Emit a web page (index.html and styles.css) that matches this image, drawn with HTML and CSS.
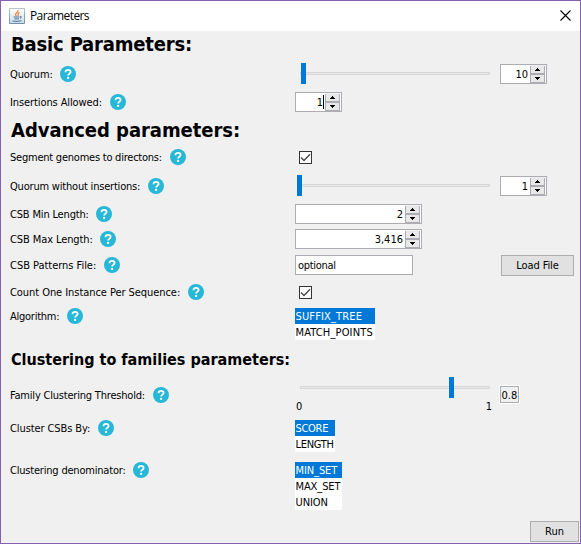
FILE: index.html
```html
<!DOCTYPE html>
<html lang="en">
<head>
<meta charset="utf-8">
<title>Parameters</title>
<link rel="stylesheet" href="styles.css">
</head>
<body>
<svg class="defs" aria-hidden="true">
  <symbol id="help" viewBox="0 0 16 16"><circle cx="8" cy="8" r="8" fill="#27b7d7"/><path d="M5.5 6.2C5.5 4.6 6.600 3.800 8 3.800S10.600 4.600 10.600 6C10.600 7.500 8.100 7.800 8.100 9.600" fill="none" stroke="#fff" stroke-width="1.8"/><circle cx="8.1" cy="11.9" r="1.15" fill="#fff"/></symbol>
  <symbol id="up" viewBox="0 0 5 3"><path d="M0 3V2h1V1h1V0h1v1h1v1h1v1z"/></symbol>
  <symbol id="down" viewBox="0 0 5 3"><path d="M0 0h5v1H4v1H3v1H2V2H1V1H0z"/></symbol>
  <symbol id="check" viewBox="0 0 11 11"><path d="M1 5.5l3 3L10 2.3" fill="none" stroke="#444" stroke-width="1.3"/></symbol>
</svg>
<div class="window">
  <header class="titlebar">
    <svg class="java" viewBox="0 0 16 16"><defs><linearGradient id="g" x2="0" y2="1"><stop stop-color="#b5c4d1"/><stop offset="1" stop-color="#6e8ca5"/></linearGradient><linearGradient id="i" x2="0" y2="1"><stop stop-color="#fff"/><stop offset="1" stop-color="#cddce7"/></linearGradient></defs><rect width="16" height="16" rx="1" fill="url(#g)"/><rect x="1" y="1" width="14" height="14" fill="url(#i)"/><path d="M9 2Q9.500 3.500 7.500 5T7.500 8M10.500 4.500Q8.200 5.500 9.300 8" fill="none" stroke="#e87722" stroke-width="1.100"/><path d="M4.500 9H10.500M5.500 10.900H10M3.500 13Q8 14 12.500 12.700M11 8.500Q14 8.600 11 10.500" fill="none" stroke="#4b7394"/></svg>
    <span class="title">Parameters</span>
    <svg class="close" viewBox="0 0 11 11"><path d="M.5.5l10 10M10.500.5l-10 10" stroke="#000" stroke-width="1.100"/></svg>
  </header>
  <main>
    <h1 class="basic">Basic Parameters:</h1>
    <div class="row quorum"><div class="label"><span>Quorum:</span><svg><use href="#help"/></svg></div>
      <div class="control"><div class="slider s-10"><i></i></div></div>
      <div class="spinner"><span>10</span><b><u><svg><use href="#up"/></svg></u><u><svg><use href="#down"/></svg></u></b></div></div>
    <div class="row insertions"><div class="label"><span>Insertions Allowed:</span><svg><use href="#help"/></svg></div>
      <div class="spinner focus"><span>1</span><b><u><svg><use href="#up"/></svg></u><u><svg><use href="#down"/></svg></u></b></div></div>
    <h1 class="advanced">Advanced parameters:</h1>
    <div class="row segment"><div class="label"><span>Segment genomes to directons:</span><svg><use href="#help"/></svg></div>
      <div class="checkbox"><svg><use href="#check"/></svg></div></div>
    <div class="row noins"><div class="label"><span>Quorum without insertions:</span><svg><use href="#help"/></svg></div>
      <div class="control"><div class="slider s-1"><i></i></div></div>
      <div class="spinner"><span>1</span><b><u><svg><use href="#up"/></svg></u><u><svg><use href="#down"/></svg></u></b></div></div>
    <div class="row min"><div class="label"><span>CSB Min Length:</span><svg><use href="#help"/></svg></div>
      <div class="spinner wide"><span>2</span><b><u><svg><use href="#up"/></svg></u><u><svg><use href="#down"/></svg></u></b></div></div>
    <div class="row max"><div class="label"><span>CSB Max Length:</span><svg><use href="#help"/></svg></div>
      <div class="spinner wide"><span>3,416</span><b><u><svg><use href="#up"/></svg></u><u><svg><use href="#down"/></svg></u></b></div></div>
    <div class="row patterns"><div class="label"><span>CSB Patterns File:</span><svg><use href="#help"/></svg></div>
      <div class="control"><div class="textfield">optional</div></div>
      <div class="button load">Load File</div></div>
    <div class="row count"><div class="label"><span>Count One Instance Per Sequence:</span><svg><use href="#help"/></svg></div>
      <div class="checkbox"><svg><use href="#check"/></svg></div></div>
    <div class="row top algorithm"><div class="label"><span>Algorithm:</span><svg><use href="#help"/></svg></div>
      <ul class="list"><li class="on">SUFFIX_TREE</li><li>MATCH_POINTS</li></ul></div>
    <h2>Clustering to families parameters:</h2>
    <div class="row top threshold"><div class="label"><span>Family Clustering Threshold:</span><svg><use href="#help"/></svg></div>
      <div class="control"><div class="slider s-08"><i></i></div><div class="ticks"><span>0</span><span>1</span></div></div>
      <div class="value">0.8</div></div>
    <div class="row top cluster"><div class="label"><span>Cluster CSBs By:</span><svg><use href="#help"/></svg></div>
      <ul class="list"><li class="on">SCORE</li><li>LENGTH</li></ul></div>
    <div class="row top denominator"><div class="label"><span>Clustering denominator:</span><svg><use href="#help"/></svg></div>
      <ul class="list"><li class="on">MIN_SET</li><li>MAX_SET</li><li>UNION</li></ul></div>
    <footer><div class="button run">Run</div></footer>
  </main>
</div>
</body>
</html>
```
FILE: styles.css
```css
* { box-sizing: border-box; }
body { margin: 0; font: 11px/16px "DejaVu Sans Condensed", "DejaVu Sans", sans-serif; font-stretch: condensed; color: #000; }
.defs { position: absolute; width: 0; height: 0; }
svg { display: block; flex: none; }
.window { width: 581px; height: 544px; border: 1px solid #8560b0; background: #f0f0f0; overflow: hidden; }
.titlebar { height: 30px; background: #fff; display: flex; align-items: center; padding: 0 9px 1px 8px; }
.java { width: 16px; height: 16px; }
.title { margin-left: 5px; font: 12px/16px "Open Sans", sans-serif; letter-spacing: -.6px; flex: 1; }
.close { width: 11px; height: 11px; }
h1, h2 { margin: 0; padding-left: 10px; font-weight: bold; white-space: nowrap; }
h1 { font-size: 20px; }
h2 { font-size: 16px; height: 37px; line-height: 39px; }
.basic { height: 26px; line-height: 26px; letter-spacing: -.17px; }
.advanced { height: 34px; line-height: 34px; letter-spacing: -.05px; }
.row { display: flex; align-items: center; padding-left: 9px; }
.top { align-items: flex-start; }
.label { width: 285px; height: 16px; flex: none; display: flex; gap: 7px; white-space: nowrap; }
.label span { line-height: 18px; }
.label svg { width: 16px; height: 16px; }
.control { width: 205px; flex: none; }
.quorum { height: 34px; }
.quorum .label span { width: 43px; letter-spacing: -.1px; }
.insertions { height: 22px; }
.insertions .label span { width: 93px; letter-spacing: -.1px; }
.segment { height: 20px; }
.segment .label span { width: 153px; letter-spacing: -.23px; }
.noins { height: 38px; }
.noins .label span { width: 131px; letter-spacing: -.2px; }
.min { height: 18px; }
.min .label span { width: 79px; letter-spacing: -.17px; }
.max { height: 32px; }
.max .label span { width: 83px; letter-spacing: -.1px; }
.patterns { height: 20px; margin-bottom: 1px; }
.patterns .label span { width: 87px; letter-spacing: -.03px; }
.count { height: 32px; }
.count .label span { width: 171px; letter-spacing: -.06px; }
.algorithm { height: 32px; }
.algorithm .label span { width: 50px; letter-spacing: -.25px; }
.threshold { height: 43px; }
.threshold .label span { width: 136px; letter-spacing: -.2px; }
.cluster { height: 42px; }
.cluster .label span { width: 81px; letter-spacing: -.1px; }
.denominator { height: 59px; }
.denominator .label span { width: 116px; letter-spacing: -.2px; }
.slider { width: 190px; height: 3px; margin-left: 5px; border: 1px solid #d6d6d6; background: #e7eaea; display: flex; align-items: center; }
.slider i { width: 5px; height: 21px; background: #0078d7; flex: none; }
.quorum .slider, .noins .slider { margin-top: -1px; }
.s-10 i { margin-left: 0; }
.s-1 i { margin-left: -4px; }
.s-08 i { margin-left: 148px; }
.spinner { width: 47px; height: 20px; flex: none; border: 1px solid #abadb3; background: #fff; display: flex; justify-content: flex-end; line-height: 20px; padding-right: 1px; }
.spinner.wide { width: 127px; }
.spinner span { padding-right: 2px; }
.spinner b { width: 15px; background: #f0f0f0; padding-top: 1px; }
.spinner.focus span { border-right: 1px solid #000; padding: 0; margin: 2px 1px 2px 0; line-height: 16px; }
.spinner u { height: 8px; border: 1px solid #abadb3; border-top: 0; background: #e8e8e8; display: flex; align-items: center; justify-content: center; }
.spinner u + u { border-top: 1px solid #abadb3; height: 9px; }
.spinner u svg { width: 5px; height: 3px; }
.checkbox { width: 13px; height: 13px; margin-left: 4px; border: 1px solid #333; background: #fff; }
.checkbox svg { width: 11px; height: 11px; }
.textfield { width: 118px; height: 20px; border: 1px solid #abadb3; background: #fff; line-height: 20px; padding-left: 2px; letter-spacing: -.3px; }
.button { border: 1px solid #adadad; background: #e1e1e1; text-align: center; height: 21px; line-height: 20px; }
.load { width: 73px; margin: 0 0 -1px 1px; letter-spacing: -.1px; }
.run { width: 49px; }
.list { list-style: none; margin: 0; padding: 0; background: #fff; white-space: nowrap; }
.list li { height: 16px; line-height: 18px; padding-left: .5px; }
.on { background: #0078d7; color: #fff; }
.algorithm .list { width: 80px; letter-spacing: .15px; }
.cluster .list { width: 40px; letter-spacing: -.3px; }
.denominator .list { width: 47px; letter-spacing: -.1px; }
.threshold .label { margin-top: 10px; }
.threshold .slider { margin-top: 9px; }
.ticks { display: flex; justify-content: space-between; margin: 10px 8px 0 1px; }
.value { width: 19px; height: 17px; margin-top: 9px; border: 1px solid #abadb3; outline: 1px solid #fff; line-height: 17px; padding-left: .5px; white-space: nowrap; }
footer { display: flex; justify-content: flex-end; padding-right: 1px; }
```
